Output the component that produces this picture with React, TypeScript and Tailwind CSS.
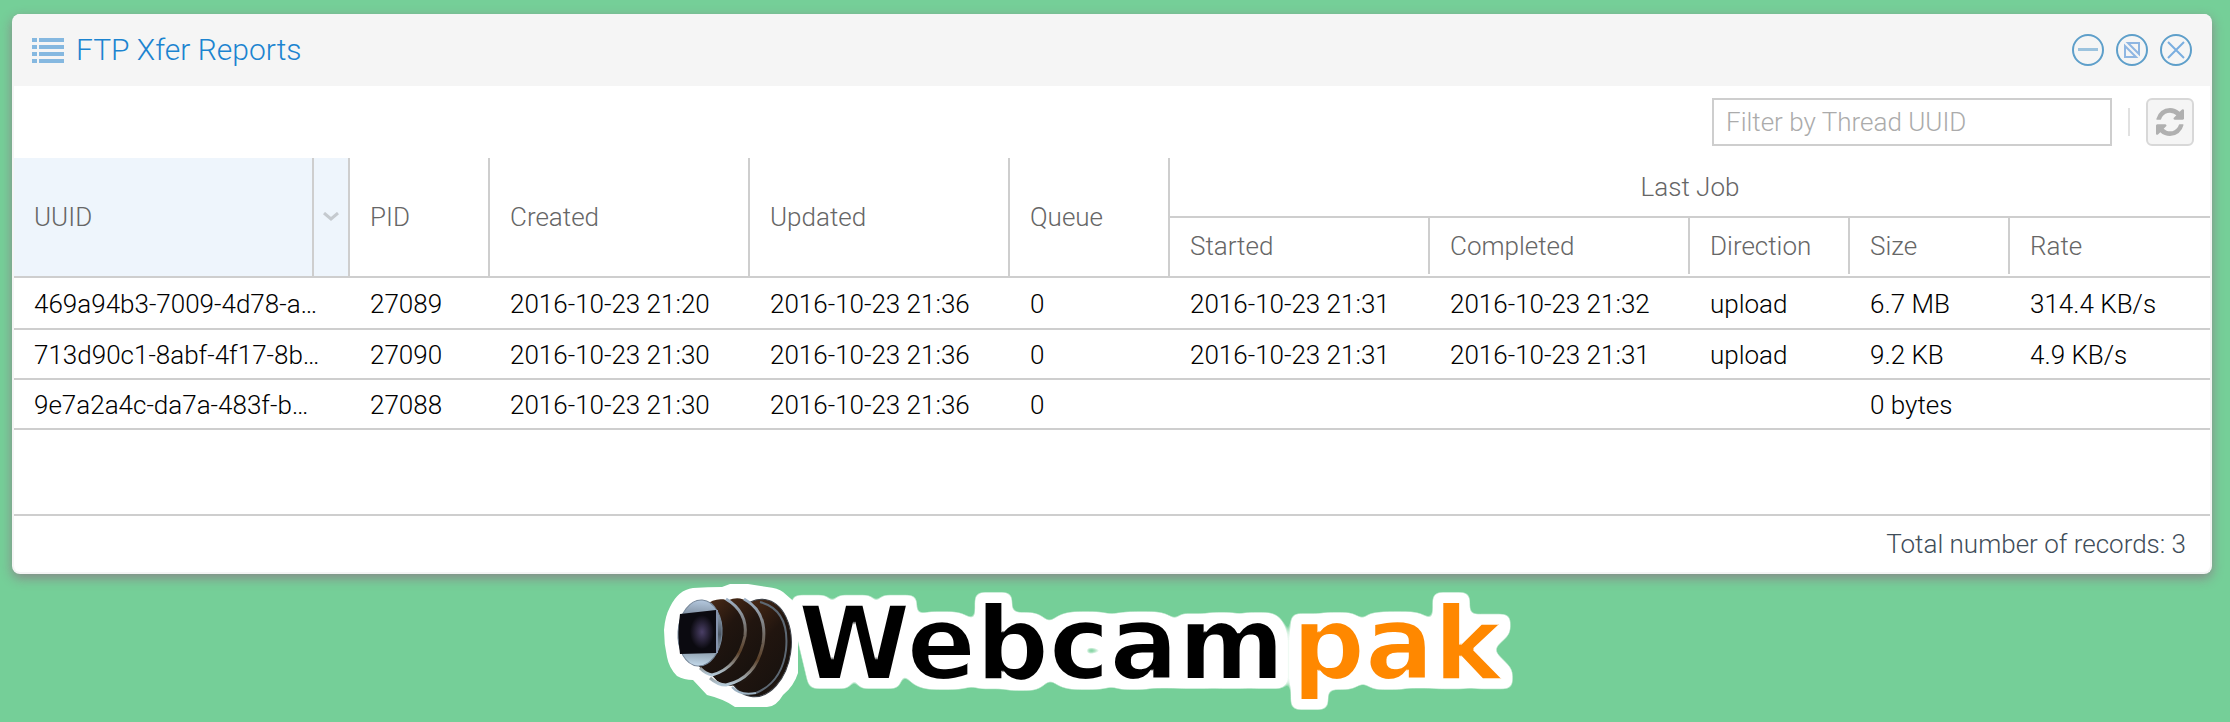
import React from "react";

const columns = [
  "w-[336px]", "w-[140px]", "w-[260px]", "w-[260px]", "w-[160px]",
  "w-[260px]", "w-[260px]", "w-[160px]", "w-[160px]", "",
];

const rows = [
  ["469a94b3-7009-4d78-a…", "27089", "2016-10-23 21:20", "2016-10-23 21:36", "0", "2016-10-23 21:31", "2016-10-23 21:32", "upload", "6.7 MB", "314.4 KB/s"],
  ["713d90c1-8abf-4f17-8b…", "27090", "2016-10-23 21:30", "2016-10-23 21:36", "0", "2016-10-23 21:31", "2016-10-23 21:31", "upload", "9.2 KB", "4.9 KB/s"],
  ["9e7a2a4c-da7a-483f-b…", "27088", "2016-10-23 21:30", "2016-10-23 21:36", "0", "", "", "", "0 bytes", ""],
];

function ListIcon() {
  return (
    <svg className="h-[25px] w-8 fill-[#85b8e0]" viewBox="0 0 32 25" aria-hidden="true">
      {[0, 7, 14, 21].map((y) => (
        <g key={y}>
          <rect x="0" y={y} width="5" height="4" />
          <rect x="7" y={y} width="25" height="4" />
        </g>
      ))}
    </svg>
  );
}

function ToolButton({ label, children }: { label: string; children: React.ReactNode }) {
  return (
    <button type="button" aria-label={label} className="size-8">
      <svg viewBox="0 0 32 32" className="size-8" fill="none" stroke="#8fb6e2" strokeWidth="2">
        <circle cx="16" cy="16" r="15" stroke="#5e9fca" />
        {children}
      </svg>
    </button>
  );
}

function RefreshIcon() {
  return (
    <svg viewBox="0 0 1536 1536" className="size-7 fill-[#b0b0b0]" aria-hidden="true">
      <path d="M1511 928q0 5-1 7-64 268-268 434.5t-478 166.5q-146 0-282.5-55t-243.5-157l-129 129q-19 19-45 19t-45-19-19-45v-448q0-26 19-45t45-19h448q26 0 45 19t19 45-19 45l-137 137q71 66 161 102t187 36q134 0 250-65t186-179q11-17 53-117 8-23 30-23h192q13 0 22.5 9.5t9.5 22.5zm25-800v448q0 26-19 45t-45 19h-448q-26 0-45-19t-19-45 19-45l138-138q-148-137-349-137-134 0-250 65t-186 179q-11 17-53 117-8 23-30 23h-199q-13 0-22.5-9.5t-9.5-22.5v-7q65-268 270-434.5t480-166.5q146 0 284 55.5t245 156.5l130-129q19-19 45-19t45 19 19 45z" />
    </svg>
  );
}

function Lens() {
  return (
    <g>
      <path
        d="M29 4Q44 3 58 3L66 0H84L103 3Q114 4 119 8L134 21V89Q130 102 119 111 112 123 103 123H71Q60 115 43 111L29 96Q20 96 13 92 5 84 3 73 0 60 0 46 1 32 6 23 14 6 29 4z"
        fill="#fff"
      />
      <ellipse cx="94" cy="64" rx="33" ry="49" transform="rotate(8 94 64)" fill="url(#barrel)" stroke="#3a3f46" />
      <path d="M96 18Q126 26 122 66 118 98 92 109" fill="none" stroke="#5d6873" strokeWidth="2" />
      <path d="M68 103Q76 112 92 109" fill="none" stroke="#9fb4c4" strokeWidth="2" />
      <ellipse cx="70" cy="58" rx="30" ry="44" transform="rotate(8 70 58)" fill="url(#barrel)" />
      <path d="M80 15Q104 28 99 60 92 94 62 101 54 101 46 94" fill="none" stroke="url(#rim)" strokeWidth="3" />
      <ellipse cx="54" cy="53" rx="27" ry="38" transform="rotate(8 54 53)" fill="url(#barrel)" />
      <path d="M62 15Q84 28 81 52 74 84 48 91 42 90 36 84" fill="none" stroke="url(#rim)" strokeWidth="3" />
      <ellipse cx="36" cy="49" rx="22" ry="33" transform="rotate(4 36 49)" fill="url(#face)" stroke="#77889a" />
      <path d="M16 30L52 26V69L16 70Q13 50 16 30z" fill="#0b0a10" />
      <ellipse cx="38" cy="48" rx="12" ry="17" fill="url(#glass)" />
      <path d="M53 26V69" stroke="#8593ad" strokeWidth="2" />
    </g>
  );
}

function Logo() {
  return (
    <svg viewBox="0 0 852 126" className="h-[126px] w-[852px] overflow-visible" role="img" aria-label="Webcampak">
      <defs>
        <linearGradient id="barrel" x1="0" y1="0" x2="1" y2="1">
          <stop offset="0" stopColor="#5a3218" />
          <stop offset="0.5" stopColor="#21150f" />
          <stop offset="0.8" stopColor="#19120e" />
          <stop offset="1" stopColor="#3b2b22" />
        </linearGradient>
        <linearGradient id="rim" x1="0" y1="0" x2="0" y2="1">
          <stop offset="0" stopColor="#9fb2c6" />
          <stop offset="0.45" stopColor="#6f665e" />
          <stop offset="0.7" stopColor="#5b4028" />
          <stop offset="1" stopColor="#b5cad8" />
        </linearGradient>
        <linearGradient id="face" x1="0" y1="0" x2="0" y2="1">
          <stop offset="0" stopColor="#b4c8de" />
          <stop offset="0.5" stopColor="#4b5663" />
          <stop offset="1" stopColor="#c3d9ea" />
        </linearGradient>
        <radialGradient id="glass">
          <stop offset="0" stopColor="#4a3f66" />
          <stop offset="1" stopColor="#0b0a10" />
        </radialGradient>
        <filter id="halo" filterUnits="userSpaceOnUse" x="100" y="-20" width="780" height="170" colorInterpolationFilters="sRGB">
          <feMorphology in="SourceAlpha" operator="dilate" radius="9" />
          <feGaussianBlur stdDeviation="4" />
          <feColorMatrix values="0 0 0 0 1  0 0 0 0 1  0 0 0 0 1  0 0 0 8 -3" result="outline" />
          <feMorphology in="SourceGraphic" operator="erode" radius="1" result="letters" />
          <feMerge>
            <feMergeNode in="outline" />
            <feMergeNode in="letters" />
          </feMerge>
        </filter>
      </defs>
      <g filter="url(#halo)" fontFamily="'DejaVu Sans'" fontWeight="700" fontSize="102">
        <text x="134" y="95" fill="#000">Webcam</text>
        <text x="628" y="95" fill="#ff8800">pak</text>
      </g>
      <Lens />
    </svg>
  );
}

const leaf = "border-r-2 border-[#cecece] px-5 text-left align-middle font-light";

export default function App() {
  return (
    <div className="min-h-screen bg-[#75cf98] px-3 pt-[14px] font-['Roboto','Liberation_Sans',sans-serif] text-[26px] leading-[30px] font-light">
      <main className="mr-[6px] overflow-hidden rounded-lg border-2 border-t-0 border-[#f5f5f5] bg-white shadow-[0_4px_12px_#888]">
        <header className="flex h-[72px] items-center bg-[#f5f5f5] px-[18px]">
          <ListIcon />
          <h1 className="ml-3 text-[30px] leading-9 text-[#1c84d0]">FTP Xfer Reports</h1>
          <div className="ml-auto flex gap-3">
            <ToolButton label="Minimize"><path d="M6 15.500h20" strokeWidth="3" stroke="#9cc3de" /></ToolButton>
            <ToolButton label="Restore"><path d="M9 12v11h11zM12 9h11v11z" /></ToolButton>
            <ToolButton label="Close"><path d="M8 8l16 16M24 8L8 24" stroke="#7aaee0" /></ToolButton>
          </div>
        </header>
        <div className="flex h-[72px] items-center justify-end gap-4 px-4">
          <input aria-label="Filter by Thread UUID" placeholder="Filter by Thread UUID" className="h-12 w-[400px] border-2 border-[#cecece] px-3 placeholder:text-[#ababab]" />
          <span className="h-7 w-[2px] bg-[#e1e1e1]" />
          <button type="button" aria-label="Refresh" className="flex size-12 items-center justify-center rounded-md border-2 border-[#d8d8d8] bg-[#f5f5f5]">
            <RefreshIcon />
          </button>
        </div>
        <table className="w-full table-fixed border-separate border-spacing-0">
          <colgroup>{columns.map((c, i) => <col key={i} className={c} />)}</colgroup>
          <thead className="text-[#666]">
            <tr className="h-[60px]">
              <th rowSpan={2} className="border-r-2 border-b-2 border-[#cecece] bg-[#eef5fc] p-0 text-left font-light">
                <div className="flex h-[118px] items-center pl-5">
                  <span className="flex-1">UUID</span>
                  <button type="button" aria-label="UUID column menu" className="flex h-full w-9 items-center justify-center border-l-2 border-[#cecece]">
                    <svg viewBox="0 0 16 10" className="h-[10px] w-4" fill="none" stroke="#c5cacf" strokeWidth="3"><path d="M1 1l7 6 7-6" /></svg>
                  </button>
                </div>
              </th>
              {["PID", "Created", "Updated", "Queue"].map((t) => (
                <th key={t} rowSpan={2} className={`${leaf} border-b-2`}>{t}</th>
              ))}
              <th colSpan={5} className="border-b-2 border-[#cecece] text-center font-light">Last Job</th>
            </tr>
            <tr className="h-[60px]">
              {["Started", "Completed", "Direction", "Size", "Rate"].map((t) => (
                <th key={t} className="border-b-2 border-[#cecece] p-0 pb-[2px] text-left font-light">
                  <div className={`flex h-14 items-center px-5 ${t === "Rate" ? "" : "border-r-2 border-[#cecece]"}`}>{t}</div>
                </th>
              ))}
            </tr>
          </thead>
          <tbody className="text-black">
            {rows.map((row, r) => (
              <tr key={row[1]} className={r === 0 ? "h-[52px]" : "h-[50px]"}>
                {row.map((cell, c) => (
                  <td key={c} className="border-b-2 border-[#cecece] p-0 pt-[2px] pl-5 whitespace-nowrap">{cell}</td>
                ))}
              </tr>
            ))}
          </tbody>
        </table>
        <footer className="mt-[84px] flex h-[58px] items-center justify-end border-t-2 border-[#cecece] px-6 text-[#3f4d59]">
          Total number of records: 3
        </footer>
      </main>
      <div className="mt-[10px] flex justify-center pr-[50px]">
        <Logo />
      </div>
    </div>
  );
}
